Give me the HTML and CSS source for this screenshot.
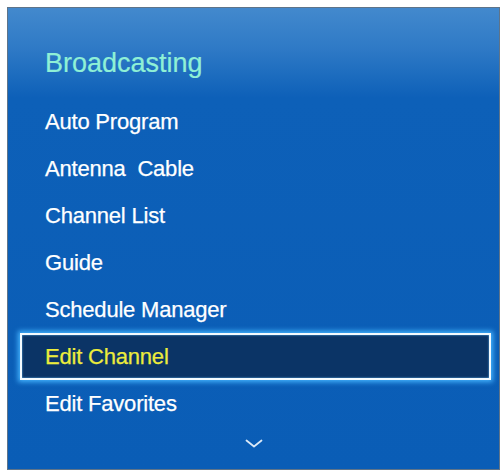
FILE: index.html
```html
<!DOCTYPE html>
<html>
<head>
<meta charset="utf-8">
<link rel="stylesheet" href="styles.css">
</head>
<body>
<div class="panel">
  <div class="title">Broadcasting</div>
  <ul class="menu">
    <li class="item">Auto Program</li>
    <li class="item">Antenna&nbsp;&nbsp;Cable</li>
    <li class="item">Channel List</li>
    <li class="item">Guide</li>
    <li class="item">Schedule Manager</li>
    <li class="item selected">Edit Channel</li>
    <li class="item">Edit Favorites</li>
  </ul>
  <div class="more">
    <svg width="18" height="9" viewBox="0 0 18 9"><path d="M1.5 1.5 L9 7.5 L16.5 1.5" fill="none" stroke="#dbe9f7" stroke-width="1.8" stroke-linecap="round" stroke-linejoin="round"/></svg>
  </div>
</div>
</body>
</html>
```

FILE: styles.css
```css
html, body {
  margin: 0;
  padding: 0;
  background: #ffffff;
}
body {
  padding: 7px 4px 0 7px;
  font-family: "Liberation Sans", Arial, sans-serif;
}
.panel {
  width: 491px;
  border: 1px solid #5f7489;
  background: linear-gradient(to bottom, #4389cd 0px, #2f7ac6 40px, #0d60b8 90px, #0a5db6 100%);
  padding-top: 39px;
  box-sizing: content-box;
  display: flex;
  flex-direction: column;
  overflow: hidden;
  height: 422px;
}
.title {
  font-size: 27px;
  line-height: 32px;
  color: #8ff0d6;
  padding-left: 37px;
  margin-bottom: 19px;
  -webkit-text-stroke: 0.2px #8ff0d6;
}
.menu {
  list-style: none;
  margin: 0;
  padding: 0;
}
.item {
  font-size: 22px;
  line-height: 47px;
  height: 47px;
  color: #ffffff;
  margin: 0 8px 0 12px;
  padding-left: 25px;
  box-sizing: border-box;
  letter-spacing: -0.2px;
  -webkit-text-stroke: 0.25px currentColor;
}
.item.selected {
  background: #0b3466;
  color: #ecec3c;
  border: 2px solid #f4fbff;
  padding-left: 23px;
  line-height: 43px;
  box-shadow: 0 0 5px 2px #45b4ff, inset 0 0 2px #6fc4ff;
}
.more {
  display: flex;
  justify-content: center;
  padding-top: 12px;
}
.more svg {
  display: block;
}
```
